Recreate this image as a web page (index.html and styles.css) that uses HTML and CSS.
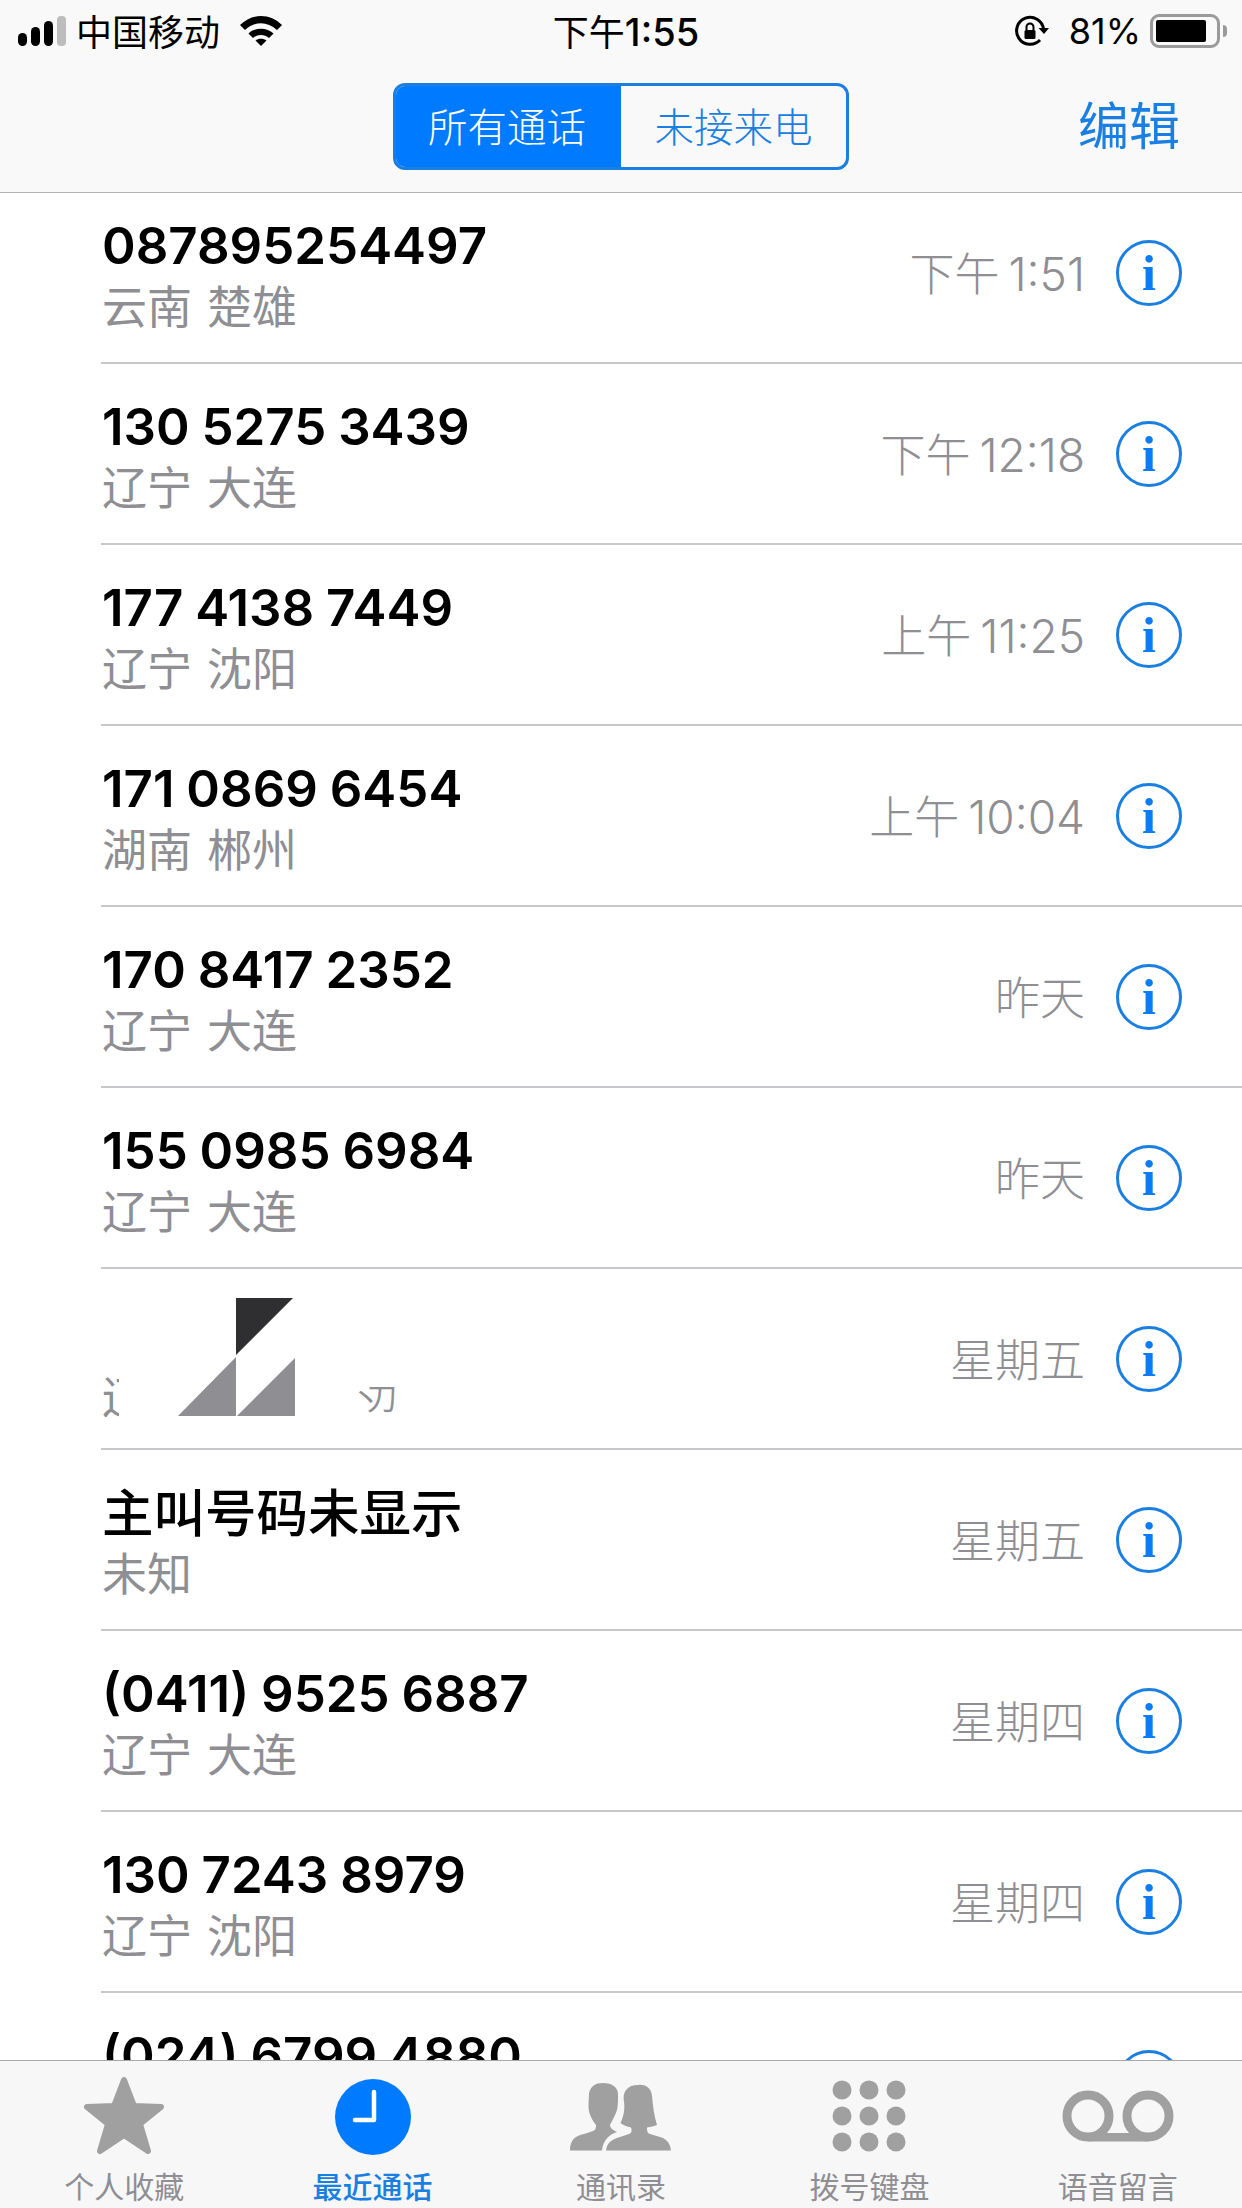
FILE: index.html
```html
<!DOCTYPE html>
<html>
<head>
<meta charset="utf-8">
<link rel="stylesheet" href="styles.css">
</head>
<body>
<div class="phone">

<div class="header">
  <div class="status">
    <div class="status_left">
      <svg class="signal" width="48" height="30" viewBox="0 0 48 30">
        <rect x="0" y="17" width="9" height="13" rx="4.5" fill="#000"/>
        <rect x="13" y="11" width="9" height="19" rx="4.5" fill="#000"/>
        <rect x="26" y="5" width="9" height="25" rx="4.5" fill="#000"/>
        <rect x="39" y="0" width="9" height="30" rx="4" fill="#bdbdbd"/>
      </svg>
      <span class="carrier">中国移动</span>
      <svg class="wifi" width="42" height="30" viewBox="0 0 42 30">
        <path d="M0 9 C12 -3 30 -3 42 9 L37 14 C27 5 15 5 5 14 Z" fill="#000"/>
        <path d="M8.5 17.5 C15 11 27 11 33.5 17.5 L29 22 C24.500 18 17.500 18 13 22 Z" fill="#000"/>
        <path d="M15.500 24.500 C18.500 22 23.500 22 26.500 24.500 L21 30 Z" fill="#000"/>
      </svg>
    </div>
    <div class="clock"><span class="clock_cjk">下午</span>1:55</div>
    <div class="status_right">
      <svg class="rotlock" width="34" height="32" viewBox="0 0 34 32">
        <path d="M25 25 A13.500 13.500 0 1 1 28.500 14" fill="none" stroke="#000" stroke-width="3"/>
        <path d="M23.500 13 L34 13 L29 19 Z" fill="#000"/>
        <rect x="9.500" y="15" width="11" height="9" rx="1.500" fill="#000"/>
        <path d="M11.500 15 V12 A3.500 3.500 0 0 1 18.500 12 V15" fill="none" stroke="#000" stroke-width="2"/>
      </svg>
      <span class="percent">81%</span>
      <div class="battery"><div class="battery_fill"></div></div>
      <div class="battery_nub"></div>
    </div>
  </div>
  <div class="nav">
    <div></div>
    <div class="segment">
      <div class="seg_item seg_active">所有通话</div>
      <div class="seg_item">未接来电</div>
    </div>
    <div class="edit">编辑</div>
  </div>
</div>

<div class="list">
<div class="list_inner">

  <div class="row">
    <div class="who"><div class="name">087895254497</div><div class="place">云南 楚雄</div></div>
    <div class="time"><span class="cjk">下午</span> 1:51</div>
    <div class="info"><span>i</span></div>
  </div>
  <div class="row">
    <div class="who"><div class="name">130 5275 3439</div><div class="place">辽宁 大连</div></div>
    <div class="time"><span class="cjk">下午</span> 12:18</div>
    <div class="info"><span>i</span></div>
  </div>
  <div class="row">
    <div class="who"><div class="name">177 4138 7449</div><div class="place">辽宁 沈阳</div></div>
    <div class="time"><span class="cjk">上午</span> 11:25</div>
    <div class="info"><span>i</span></div>
  </div>
  <div class="row">
    <div class="who"><div class="name">171 0869 6454</div><div class="place">湖南 郴州</div></div>
    <div class="time"><span class="cjk">上午</span> 10:04</div>
    <div class="info"><span>i</span></div>
  </div>
  <div class="row">
    <div class="who"><div class="name">170 8417 2352</div><div class="place">辽宁 大连</div></div>
    <div class="time"><span class="cjk">昨天</span></div>
    <div class="info"><span>i</span></div>
  </div>
  <div class="row">
    <div class="who"><div class="name">155 0985 6984</div><div class="place">辽宁 大连</div></div>
    <div class="time"><span class="cjk">昨天</span></div>
    <div class="info"><span>i</span></div>
  </div>

  <!-- name is covered by the triangles in this one -->
  <div class="row">
    <div class="who who_hidden">
      <span class="frag_left">辽</span>
      <svg class="mark" width="118" height="119" viewBox="0 0 118 119">
        <polygon points="58,0 115,0 58,57" fill="#2f2f31"/>
        <polygon points="58,59 58,118 0,118" fill="#8e8e93"/>
        <polygon points="117,60 117,118 59,118" fill="#8e8e93"/>
      </svg>
      <span class="frag_right">丶刀</span>
    </div>
    <div class="time"><span class="cjk">星期五</span></div>
    <div class="info"><span>i</span></div>
  </div>

  <div class="row">
    <div class="who"><div class="name name_cjk">主叫号码未显示</div><div class="place">未知</div></div>
    <div class="time"><span class="cjk">星期五</span></div>
    <div class="info"><span>i</span></div>
  </div>
  <div class="row">
    <div class="who"><div class="name">(0411) 9525 6887</div><div class="place">辽宁 大连</div></div>
    <div class="time"><span class="cjk">星期四</span></div>
    <div class="info"><span>i</span></div>
  </div>
  <div class="row">
    <div class="who"><div class="name">130 7243 8979</div><div class="place">辽宁 沈阳</div></div>
    <div class="time"><span class="cjk">星期四</span></div>
    <div class="info"><span>i</span></div>
  </div>
  <div class="row">
    <div class="who"><div class="name">(024) 6799 4880</div><div class="place">辽宁 沈阳</div></div>
    <div class="time"><span class="cjk">星期四</span></div>
    <div class="info"><span>i</span></div>
  </div>

</div>
</div>

<div class="tabbar">
  <div class="tab">
    <svg width="82" height="80" viewBox="0 0 82 80">
      <polygon points="41,4 51,30 78,31 57,48 65,75 41,59 17,75 25,48 4,31 31,30" fill="#a0a0a0" stroke="#a0a0a0" stroke-width="6" stroke-linejoin="round"/>
    </svg>
    <div class="tab_label">个人收藏</div>
  </div>
  <div class="tab tab_active">
    <svg width="76" height="80" viewBox="0 0 76 80">
      <circle cx="38" cy="41" r="38" fill="#007aff"/>
      <path d="M39 16 V44 H20" fill="none" stroke="#fff" stroke-width="4.500" stroke-linecap="round" stroke-linejoin="round"/>
    </svg>
    <div class="tab_label">最近通话</div>
  </div>
  <div class="tab">
    <svg width="102" height="80" viewBox="0 0 102 80">
      <path d="M0 74.500 C0 64 5 60 14 58 L23 55 C26 54 26 51 26 49 C22 44 19.500 38 19 35 C18 30 19 22 19 18 C20 10 26 7 33 7 C40 7 48 10 48 18 C48 24 48 30 47 34 C45 40 42 45 40 49 C40 51 41 53 47 56 C40 58 33 64 32 74.500 Z" fill="#a0a0a0"/>
      <path d="M36 74.500 C37 66 43 63 50 61 L59 58 C62 57 62 54 61 51.500 C57 51 53 49 50.500 47 C54 40 55 32 54 26 C52 15 58 9 68 9 C76 8 81 12 82 20 C83 30 84 40 87 49 C84 50 81 51 77 51.500 C77 54 77 57 80 58 L90 61 C97 63 100 67 101 74.500 Z" fill="#a0a0a0"/>
    </svg>
    <div class="tab_label">通讯录</div>
  </div>
  <div class="tab">
    <svg width="74" height="80" viewBox="0 0 74 80">
      <circle cx="10" cy="14" r="9.500" fill="#a0a0a0"/><circle cx="37" cy="14" r="9.500" fill="#a0a0a0"/><circle cx="64" cy="14" r="9.500" fill="#a0a0a0"/>
      <circle cx="10" cy="40" r="9.500" fill="#a0a0a0"/><circle cx="37" cy="40" r="9.500" fill="#a0a0a0"/><circle cx="64" cy="40" r="9.500" fill="#a0a0a0"/>
      <circle cx="10" cy="66" r="9.500" fill="#a0a0a0"/><circle cx="37" cy="66" r="9.500" fill="#a0a0a0"/><circle cx="64" cy="66" r="9.500" fill="#a0a0a0"/>
    </svg>
    <div class="tab_label">拨号键盘</div>
  </div>
  <div class="tab">
    <svg width="114" height="80" viewBox="0 0 114 80">
      <circle cx="27" cy="40" r="21" fill="none" stroke="#a0a0a0" stroke-width="9"/>
      <circle cx="87" cy="40" r="21" fill="none" stroke="#a0a0a0" stroke-width="9"/>
      <rect x="27" y="57" width="60" height="8.500" fill="#a0a0a0"/>
    </svg>
    <div class="tab_label">语音留言</div>
  </div>
</div>

</div>
</body>
</html>
```
FILE: styles.css
```css
* {
  box-sizing: border-box;
}

body {
  margin: 0;
  background-color: #fff;
  font-family: Inter, "Noto Sans CJK SC", sans-serif;
}

.phone {
  width: 1242px;
  height: 2208px;
  display: flex;
  flex-direction: column;
  overflow: hidden;
}

/* top bars */
.header {
  flex: none;
  height: 193px;
  background-color: #f9f9f9;
  border-bottom: 1px solid #b2b2b2;
}

.status {
  height: 62px;
  display: grid;
  grid-template-columns: 1fr auto 1fr;
  align-items: center;
  color: #000;
  font-size: 36px;
}

.status_left {
  display: flex;
  align-items: center;
  padding-left: 18px;
}

.carrier {
  margin-left: 10px;
  margin-bottom: 3px;
  font-family: "Noto Sans CJK SC", sans-serif;
  line-height: 46px;
}

.wifi {
  margin-left: 20px;
}

.clock {
  margin-left: 10px;
  margin-bottom: 3px;
  font-weight: 500;
  font-size: 38px;
}

.clock_cjk {
  font-size: 36px;
  font-weight: 400;
}

.status_right {
  display: flex;
  align-items: center;
  justify-content: flex-end;
  padding-right: 15px;
}

.percent {
  margin-left: 20px;
  font-size: 36px;
}

.battery {
  margin-left: 9px;
  width: 70px;
  height: 34px;
  border: 3px solid #9a9a9a;
  border-radius: 9px;
  padding: 3px;
}

.battery_fill {
  width: 50px;
  height: 100%;
  background-color: #000;
  border-radius: 2px;
}

.battery_nub {
  width: 4px;
  height: 12px;
  margin-left: 3px;
  background-color: #9a9a9a;
  border-radius: 0 5px 5px 0;
}

.nav {
  height: 130px;
  display: grid;
  grid-template-columns: 1fr auto 1fr;
  padding-top: 21px;
  align-items: start;
}

.segment {
  display: flex;
  width: 456px;
  height: 87px;
  border: 3px solid #1a7fe0;
  border-radius: 12px;
  overflow: hidden;
}

.seg_item {
  width: 228px;
  display: flex;
  align-items: center;
  justify-content: center;
  padding-bottom: 4px;
  font-size: 39.5px;
  color: #1a7fe0;
  font-family: "Noto Sans CJK SC", sans-serif;
  font-weight: 300;
}

.seg_active {
  background-color: #007aff;
  color: #fff;
  padding-right: 3px;
}

.edit {
  justify-self: end;
  padding-right: 62px;
  font-size: 51px;
  line-height: 60px;
  margin-top: 10px;
  color: #1a7fe0;
  font-family: "Noto Sans CJK SC", sans-serif;
  font-weight: 400;
}

/* call list */
.list {
  flex: 1;
  overflow: hidden;
  background-color: #fff;
}

.list_inner {
  margin-top: -10px;
}

.row {
  height: 181px;
  margin-left: 101px;
  padding-right: 60px;
  display: flex;
  align-items: center;
  border-bottom: 2px solid #c8c7cc;
}

.who {
  flex: 1;
  padding-left: 1px;
  height: 100%;
  padding-top: 33px;
}

.name {
  font-size: 51px;
  font-weight: 600;
  line-height: 60px;
  word-spacing: -1px;
  color: #000;
}

.name_cjk {
  font-size: 51.5px;
  font-weight: 500;
}

.place {
  font-size: 45px;
  line-height: 50px;
  margin-top: 4px;
  word-spacing: 5px;
  color: #8e8e93;
  font-family: "Noto Sans CJK SC", sans-serif;
  font-weight: 400;
}

.who_hidden {
  display: flex;
  align-items: flex-end;
  padding-top: 0;
  padding-bottom: 31px;
  color: #8e8e93;
}

.frag_left {
  width: 17px;
  height: 44px;
  overflow: hidden;
  font-size: 44px;
  line-height: 44px;
  font-family: "Noto Sans CJK SC", sans-serif;
}

.mark {
  margin-left: 59px;
}

.frag_right {
  margin-left: 55px;
  margin-bottom: 3px;
  font-size: 30px;
  line-height: 36px;
  letter-spacing: -14px;
  font-family: "Noto Sans CJK SC", sans-serif;
}

.time {
  font-size: 46px;
  font-weight: 300;
  word-spacing: -4px;
  color: #8e8e93;
  margin-right: 31px;
  padding-bottom: 3px;
}

.cjk {
  font-size: 45px;
  font-family: "Noto Sans CJK SC", sans-serif;
}

.info {
  flex: none;
  width: 66px;
  height: 66px;
  border: 3px solid #1a7fe0;
  border-radius: 50%;
  display: flex;
  align-items: center;
  justify-content: center;
}

.info span {
  font-family: "Liberation Serif", serif;
  font-weight: 700;
  font-size: 50px;
  line-height: 50px;
  color: #0a7cf5;
}

/* bottom tabs */
.tabbar {
  flex: none;
  height: 148px;
  display: flex;
  background-color: #f7f7f8;
  border-top: 1px solid #a8a8a8;
}

.tab {
  flex: 1;
  display: flex;
  flex-direction: column;
  align-items: center;
  padding-top: 15px;
}

.tab_label {
  font-size: 30px;
  line-height: 40px;
  margin-top: 9px;
  color: #8e8e93;
  font-family: "Noto Sans CJK SC", sans-serif;
}

.tab_active .tab_label {
  color: #1a7fe0;
  font-weight: 500;
}
```
